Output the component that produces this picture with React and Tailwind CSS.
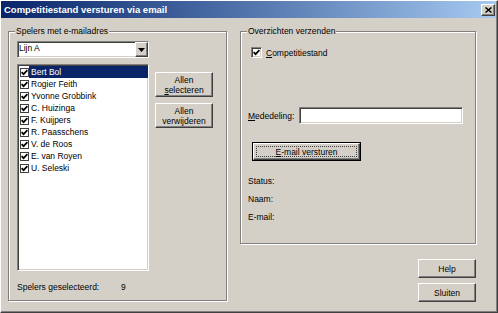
import React from 'react';

const spelers = [
  'Bert Bol',
  'Rogier Feith',
  'Yvonne Grobbink',
  'C. Huizinga',
  'F. Kuijpers',
  'R. Paasschens',
  'V. de Roos',
  'E. van Royen',
  'U. Seleski',
];

// classic win32 3D borders
const raised =
  'border border-t-white border-l-white border-b-[#404040] border-r-[#404040] shadow-[inset_-1px_-1px_0_#808080]';
const sunken =
  'border border-t-[#808080] border-l-[#808080] border-b-white border-r-white shadow-[inset_1px_1px_0_#404040,inset_-1px_-1px_0_#d4d0c8]';
const etched = 'border border-[#808080] shadow-[inset_1px_1px_0_#fff,1px_1px_0_#fff]';

const CheckMark = () => (
  <svg width="7" height="7" viewBox="0 0 7 7" className="block">
    <path d="M0.6 3.2 L2.6 5.2 L6.4 1.2" fill="none" stroke="#000" strokeWidth="1.7" />
  </svg>
);

const Button = ({ className = '', children }) => (
  <div className={`${raised} bg-[#d4d0c8] flex flex-col items-center justify-center leading-[10px] ${className}`}>
    {children}
  </div>
);

const App = () => {
  return (
    <div className="w-[498px] h-[313px] bg-[#d4d0c8] text-black text-[8.5px] font-['Liberation_Sans',Arial,sans-serif] border border-t-white border-l-white border-b-[#404040] border-r-[#404040]">
      <div className="h-full flex flex-col border-r border-b border-[#808080]">
        {/* Title bar */}
        <div className="h-[17px] flex items-center bg-linear-to-r from-[#0a246a] to-[#a6caf0] pl-[3px] pr-[1px]">
          <span className="flex-1 text-white font-bold text-[9.5px] leading-[12px]">
            Competitiestand versturen via email
          </span>
          <div className={`${raised} bg-[#d4d0c8] w-[14px] h-[12px] flex items-center justify-center`}>
            <svg width="7" height="6" viewBox="0 0 7 6">
              <path d="M0.5 0.5 L6.5 5.5 M6.5 0.5 L0.5 5.5" stroke="#000" strokeWidth="1.5" />
            </svg>
          </div>
        </div>

        {/* Body */}
        <div className="flex pl-[7px] pt-[8px]">
          {/* Spelers */}
          <fieldset className={`${etched} w-[219px] h-[275px] pl-[8px] pt-[5px]`}>
            <legend className="bg-[#d4d0c8] leading-[10px] px-[1px] -ml-[2px]">Spelers met e-mailadres</legend>

            <div className={`${sunken} bg-white w-[132px] h-[17px] flex`}>
              <span className="flex-1 pl-[1px] leading-[13px]">Lijn A</span>
              <div className={`${raised} bg-[#d4d0c8] w-[13px] h-full flex items-center justify-center`}>
                <svg width="7" height="4" viewBox="0 0 7 4">
                  <path d="M0 0 H7 L3.5 4 Z" fill="#000" />
                </svg>
              </div>
            </div>

            <div className="flex mt-[6px]">
              <div className={`${sunken} bg-white w-[132px] h-[207px] pt-px`}>
                {spelers.map((naam, i) => (
                  <div key={naam} className="h-[12px] flex items-center">
                    <div className="ml-[2px] w-[9px] h-[9px] border border-[#404040] bg-white flex items-center justify-center">
                      <CheckMark />
                    </div>
                    <span
                      className={`flex-1 h-full pl-[2px] leading-[12px] ${
                        i === 0 ? 'bg-[#0a246a] text-white' : ''
                      }`}
                    >
                      {naam}
                    </span>
                  </div>
                ))}
              </div>

              <div className="ml-[6px] pt-[8px] flex flex-col gap-[6px]">
                <Button className="w-[58px] h-[25px]">
                  <span>Allen</span>
                  <span><u>s</u>electeren</span>
                </Button>
                <Button className="w-[58px] h-[25px]">
                  <span>Allen</span>
                  <span>verwi<u>j</u>deren</span>
                </Button>
              </div>
            </div>

            <div className="flex mt-[11px] leading-[10px]">
              <span className="w-[104px]">Spelers geselecteerd:</span>
              <span>9</span>
            </div>
          </fieldset>

          {/* Overzichten */}
          <div className="ml-[13px] flex flex-col items-end">
            <fieldset className={`${etched} w-[236px] h-[218px] pl-[7px] pt-[11px]`}>
              <legend className="bg-[#d4d0c8] leading-[10px] px-[1px] -ml-[1px]">Overzichten verzenden</legend>

              <div className="flex items-center h-[11px]">
                <div className="ml-[3px] w-[11px] h-[11px] border border-t-[#808080] border-l-[#808080] border-b-white border-r-white shadow-[inset_1px_1px_0_#404040,inset_-1px_-1px_0_#d4d0c8] bg-white flex items-center justify-center">
                  <CheckMark />
                </div>
                <span className="ml-[4px] leading-[10px]"><u>C</u>ompetitiestand</span>
              </div>

              <div className="flex items-center mt-[49px]">
                <span className="w-[51px] leading-[10px]"><u>M</u>ededeling:</span>
                <div className={`${sunken} bg-white w-[164px] h-[17px]`} />
              </div>

              <div className="ml-[4px] mt-[18px] w-[109px] h-[19px] border border-black flex">
                <div className={`${raised} flex-1 p-[2px] flex`}>
                  <div className="flex-1 border border-dotted border-[#404040] flex items-center justify-center leading-[10px]">
                    <span><u>E</u>-mail versturen</span>
                  </div>
                </div>
              </div>

              <div className="mt-[15px] flex flex-col gap-[8px] leading-[10px]">
                <span>Status:</span>
                <span>Naam:</span>
                <span>E-mail:</span>
              </div>
            </fieldset>

            <div className="mt-[15px] flex flex-col gap-[5px]">
              <Button className="w-[58px] h-[19px]">Help</Button>
              <Button className="w-[58px] h-[19px]">Sluiten</Button>
            </div>
          </div>
        </div>
      </div>
    </div>
  );
};

export default App;
